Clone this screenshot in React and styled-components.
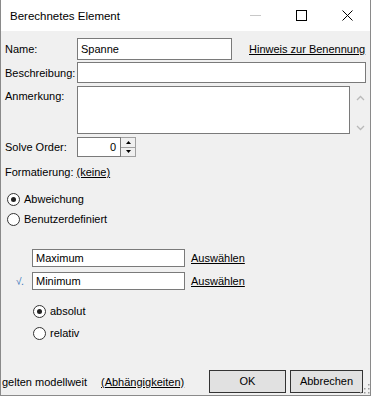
import React from "react";
import styled, { createGlobalStyle } from "styled-components";

const GlobalStyle = createGlobalStyle`
  html, body {
    margin: 0;
    padding: 0;
    background: #ffffff;
  }
  * {
    box-sizing: border-box;
  }
`;

const FONT = `"Liberation Sans", Arial, sans-serif`;

const Window = styled.div`
  width: 371px;
  height: 396px;
  display: flex;
  flex-direction: column;
  border: 1px solid #8a8a8a;
  border-top: none;
  font-family: ${FONT};
  font-size: 11px;
  color: #000;
  overflow: hidden;
`;

const TitleBar = styled.div`
  height: 31px;
  flex: none;
  display: flex;
  align-items: center;
  background: #ffffff;
  padding-left: 9px;
`;

const Title = styled.span`
  flex: 1;
  font-size: 11.5px;
`;

const Caption = styled.div`
  width: 46px;
  height: 31px;
  display: flex;
  align-items: center;
  justify-content: center;
`;

const Body = styled.div`
  flex: 1;
  display: flex;
  flex-direction: column;
  background: #f0f0f0;
  padding-bottom: 2px;
`;

const Row = styled.div`
  display: flex;
  align-items: ${(p) => (p.$top ? "flex-start" : "center")};
  margin-top: ${(p) => p.$mt || 0}px;
  height: ${(p) => p.$h}px;
`;

const Label = styled.span`
  width: 76px;
  flex: none;
  padding-left: 4px;
  padding-top: ${(p) => (p.$top ? 4 : 0)}px;
`;

const Input = styled.div`
  width: ${(p) => p.$w}px;
  height: 100%;
  flex: none;
  background: #fff;
  border: 1px solid #7a7a7a;
  display: flex;
  align-items: center;
  justify-content: ${(p) => (p.$right ? "flex-end" : "flex-start")};
  padding: 0 4px 1px 3px;
`;

const Link = styled.span`
  text-decoration: underline;
  margin-left: ${(p) => p.$ml || 0}px;
`;

const ScrollArrows = styled.div`
  height: 100%;
  width: 18px;
  display: flex;
  flex-direction: column;
  justify-content: space-between;
  align-items: center;
  padding: 9px 0 3px 2px;
`;

const Spinner = styled.div`
  width: 15px;
  height: 100%;
  display: flex;
  flex-direction: column;
`;

const SpinBtn = styled.div`
  flex: 1;
  background: #f0f0f0;
  border: 1px solid #a0a0a0;
  border-left: none;
  ${(p) => (p.$down ? "border-top: none;" : "")}
  display: flex;
  align-items: center;
  justify-content: center;
`;

const TextLine = styled.div`
  margin-top: ${(p) => p.$mt}px;
  padding-left: 4px;
  height: 15px;
  line-height: 15px;
`;

const RadioRow = styled.div`
  display: flex;
  align-items: center;
  height: 20px;
  margin-top: ${(p) => p.$mt || 0}px;
  padding-left: ${(p) => p.$pl}px;
  gap: 4px;
`;

const Radio = styled.span`
  width: 13px;
  height: 13px;
  border: 1px solid #333;
  border-radius: 50%;
  background: #fff;
  display: flex;
  align-items: center;
  justify-content: center;
  flex: none;

  &::after {
    content: "";
    width: 5px;
    height: 5px;
    border-radius: 50%;
    background: ${(p) => (p.$on ? "#222" : "transparent")};
  }
`;

const Check = styled.span`
  width: 31px;
  flex: none;
  padding-left: 15px;
  color: #2f6fb8;
  font-style: italic;
  font-size: 10px;
`;

const Footer = styled.div`
  margin-top: auto;
  display: flex;
  align-items: center;
  height: 23px;
  padding-left: 1px;
  position: relative;
`;

const FooterText = styled.span`
  width: 207px;
  flex: none;
  display: flex;
`;

const Button = styled.div`
  height: 23px;
  width: ${(p) => p.$w}px;
  margin-left: ${(p) => p.$ml || 0}px;
  background: #e1e1e1;
  border: 1px solid #333;
  display: flex;
  align-items: center;
  justify-content: center;
  padding-bottom: 1px;
`;

const Grip = styled.svg`
  position: absolute;
  right: 0;
  bottom: -1px;
`;

function ChevronUp() {
  return (
    <svg width="9" height="6" viewBox="0 0 9 6">
      <path d="M1 5 L4.5 1.5 L8 5" stroke="#b9b9b9" strokeWidth="1.3" fill="none" />
    </svg>
  );
}

function ChevronDown() {
  return (
    <svg width="9" height="6" viewBox="0 0 9 6">
      <path d="M1 1 L4.5 4.5 L8 1" stroke="#b9b9b9" strokeWidth="1.3" fill="none" />
    </svg>
  );
}

function Tri({ down }) {
  return (
    <svg width="5" height="3" viewBox="0 0 5 3">
      <path d={down ? "M0 0 H5 L2.5 3 Z" : "M0 3 H5 L2.5 0 Z"} fill="#000" />
    </svg>
  );
}

export default function App() {
  return (
    <>
      <GlobalStyle />
      <Window>
        <TitleBar>
          <Title>Berechnetes Element</Title>
          <Caption>
            <svg width="11" height="1">
              <rect width="11" height="1" fill="#c8c8c8" />
            </svg>
          </Caption>
          <Caption>
            <svg width="11" height="11">
              <rect x="0.5" y="0.5" width="10" height="10" fill="none" stroke="#000" />
            </svg>
          </Caption>
          <Caption>
            <svg width="11" height="11">
              <path d="M0.5 0.5 L10.5 10.5 M10.5 0.5 L0.5 10.5" stroke="#000" strokeWidth="1" />
            </svg>
          </Caption>
        </TitleBar>
        <Body>
          <Row $mt={7} $h={22}>
            <Label>Name:</Label>
            <Input $w={155}>Spanne</Input>
            <Link $ml={17}>Hinweis zur Benennung</Link>
          </Row>
          <Row $mt={2} $h={21}>
            <Label>Beschreibung:</Label>
            <Input $w={289} />
          </Row>
          <Row $mt={3} $h={48} $top>
            <Label $top>Anmerkung:</Label>
            <Input $w={273} />
            <ScrollArrows>
              <ChevronUp />
              <ChevronDown />
            </ScrollArrows>
          </Row>
          <Row $mt={3} $h={20}>
            <Label>Solve Order:</Label>
            <Input $w={44} $right>0</Input>
            <Spinner>
              <SpinBtn>
                <Tri />
              </SpinBtn>
              <SpinBtn $down>
                <Tri down />
              </SpinBtn>
            </Spinner>
          </Row>
          <TextLine $mt={8}>
            Formatierung: <Link>(keine)</Link>
          </TextLine>
          <RadioRow $mt={9} $pl={6}>
            <Radio $on />
            Abweichung
          </RadioRow>
          <RadioRow $pl={6}>
            <Radio />
            Benutzerdefiniert
          </RadioRow>
          <Row $mt={20} $h={18}>
            <Check />
            <Input $w={153}>Maximum</Input>
            <Link $ml={6}>Auswählen</Link>
          </Row>
          <Row $mt={5} $h={18}>
            <Check>√.</Check>
            <Input $w={153}>Minimum</Input>
            <Link $ml={6}>Auswählen</Link>
          </Row>
          <RadioRow $mt={11} $pl={32}>
            <Radio $on />
            absolut
          </RadioRow>
          <RadioRow $mt={2} $pl={32}>
            <Radio />
            relativ
          </RadioRow>
          <Footer>
            <FooterText>
              gelten modellweit
              <Link $ml={14}>(Abhängigkeiten)</Link>
            </FooterText>
            <Button $w={77}>OK</Button>
            <Button $w={73} $ml={4}>Abbrechen</Button>
            <Grip width="12" height="12" viewBox="0 0 12 12">
              {[
                [10, 2],
                [10, 6],
                [10, 10],
                [6, 6],
                [6, 10],
                [2, 10],
              ].map(([x, y]) => (
                <rect key={`${x}-${y}`} x={x} y={y} width="1.5" height="1.5" fill="#9a9a9a" />
              ))}
            </Grip>
          </Footer>
        </Body>
      </Window>
    </>
  );
}
